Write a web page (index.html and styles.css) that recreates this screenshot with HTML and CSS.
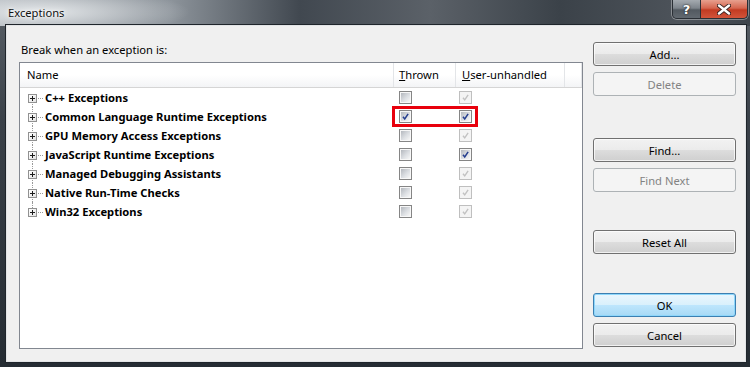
FILE: index.html
```html
<!DOCTYPE html>
<html lang="en">
<head>
    <meta charset="UTF-8">
    <title>Exceptions</title>
    <link rel="stylesheet" href="styles.css">
</head>
<body>
    <div class="window">
        <div class="titlebar">
            <span class="title">Exceptions</span>
            <div class="caption-buttons">
                <span class="cap help">?</span>
                <span class="cap close">
                    <svg width="14" height="11" viewBox="0 0 14 11">
                        <path d="M2 1.5 L12 9.5 M12 1.5 L2 9.5" stroke="#3a2320" stroke-width="4.2" stroke-linecap="round"/>
                        <path d="M2 1.5 L12 9.5 M12 1.5 L2 9.5" stroke="#fff" stroke-width="2.4" stroke-linecap="round"/>
                    </svg>
                </span>
            </div>
        </div>

        <div class="client">
            <div class="main">
                <div class="prompt">Break when an exception is:</div>
                <div class="listbox">
                    <div class="header">
                        <div class="col name">Name</div>
                        <div class="col thrown"><u>T</u>hrown</div>
                        <div class="col user"><u>U</u>ser-unhandled</div>
                        <div class="col fill"></div>
                    </div>

                    <div class="row first">
                        <div class="col name"><span class="expander"></span>C++ Exceptions</div>
                        <div class="col thrown"><span class="cb"></span></div>
                        <div class="col user"><span class="cb disabled"><svg viewBox="0 0 13 13"><polyline points="3.5,6.8 5.6,9.3 9.6,3.4"/></svg></span></div>
                    </div>
                    <div class="row">
                        <div class="col name"><span class="expander"></span>Common Language Runtime Exceptions</div>
                        <div class="col thrown"><span class="cb"><svg viewBox="0 0 13 13"><polyline points="3.5,6.8 5.6,9.3 9.6,3.4"/></svg></span></div>
                        <div class="col user"><span class="cb"><svg viewBox="0 0 13 13"><polyline points="3.5,6.8 5.6,9.3 9.6,3.4"/></svg></span></div>
                    </div>
                    <div class="row">
                        <div class="col name"><span class="expander"></span>GPU Memory Access Exceptions</div>
                        <div class="col thrown"><span class="cb"></span></div>
                        <div class="col user"><span class="cb disabled"><svg viewBox="0 0 13 13"><polyline points="3.5,6.8 5.6,9.3 9.6,3.4"/></svg></span></div>
                    </div>
                    <div class="row">
                        <div class="col name"><span class="expander"></span>JavaScript Runtime Exceptions</div>
                        <div class="col thrown"><span class="cb"></span></div>
                        <div class="col user"><span class="cb"><svg viewBox="0 0 13 13"><polyline points="3.5,6.8 5.6,9.3 9.6,3.4"/></svg></span></div>
                    </div>
                    <div class="row">
                        <div class="col name"><span class="expander"></span>Managed Debugging Assistants</div>
                        <div class="col thrown"><span class="cb"></span></div>
                        <div class="col user"><span class="cb disabled"><svg viewBox="0 0 13 13"><polyline points="3.5,6.8 5.6,9.3 9.6,3.4"/></svg></span></div>
                    </div>
                    <div class="row">
                        <div class="col name"><span class="expander"></span>Native Run-Time Checks</div>
                        <div class="col thrown"><span class="cb"></span></div>
                        <div class="col user"><span class="cb disabled"><svg viewBox="0 0 13 13"><polyline points="3.5,6.8 5.6,9.3 9.6,3.4"/></svg></span></div>
                    </div>
                    <div class="row last">
                        <div class="col name"><span class="expander"></span>Win32 Exceptions</div>
                        <div class="col thrown"><span class="cb"></span></div>
                        <div class="col user"><span class="cb disabled"><svg viewBox="0 0 13 13"><polyline points="3.5,6.8 5.6,9.3 9.6,3.4"/></svg></span></div>
                    </div>

                    <!-- annotation around the CLR checkboxes -->
                    <div class="highlight"></div>
                </div>
            </div>

            <div class="buttons">
                <button class="btn">Add...</button>
                <button class="btn" disabled>Delete</button>
                <button class="btn group">Find...</button>
                <button class="btn" disabled>Find Next</button>
                <button class="btn group reset">Reset All</button>
                <button class="btn default group ok">OK</button>
                <button class="btn">Cancel</button>
            </div>
        </div>
    </div>
</body>
</html>
```

FILE: styles.css
```css
body {
    margin: 0;
    background: #2b3239;
    font-family: "Noto Sans", "Open Sans", sans-serif;
    font-size: 11.2px;
    color: #000;
}

.window {
    width: 750px;
    height: 367px;
    display: flex;
    flex-direction: column;
    background: linear-gradient(to bottom, #5a6168 0, #3a4149 120px, #252c33 367px);
    overflow: hidden;
}

/* Title bar */
.titlebar {
    flex: 0 0 26px;
    display: flex;
    align-items: flex-start;
    background:
        radial-gradient(ellipse 150px 24px at 40px 12px, rgba(235,238,240,0.9), rgba(235,238,240,0) 100%),
        linear-gradient(to right, #a9afb5 0, #8d949b 170px, #414850 300px, #5b6168 430px, #3b4249 560px, #4d535a 680px, #3e454c 750px);
}

.title {
    padding: 5px 0 0 8px;
    line-height: 16px;
    color: #111;
    text-shadow: 0 0 6px #fff, 0 0 3px #fff;
}

.caption-buttons {
    margin-left: auto;
    margin-right: 2px;
    display: flex;
    height: 18px;
    border: 1px solid #2a2f35;
    border-top: none;
    border-radius: 0 0 5px 5px;
    overflow: hidden;
    box-shadow: 0 0 0 1px rgba(255,255,255,0.35);
}

.cap {
    display: flex;
    align-items: center;
    justify-content: center;
}

.help {
    width: 27px;
    border-right: 1px solid #2a2f35;
    background: linear-gradient(to bottom, #a4aab0 0, #7d848b 45%, #525960 55%, #626970 100%);
    color: #fff;
    font-family: "DejaVu Sans", sans-serif;
    font-weight: bold;
    font-size: 13px;
    text-shadow: 0 0 2px #222, 0 0 1px #222;
}

.close {
    width: 46px;
    background: linear-gradient(to bottom, #e7a08e 0, #d5664f 45%, #c23b22 55%, #d2543a 100%);
}

/* Client area */
.client {
    flex: 1;
    min-height: 0;
    margin: 0 5px 6px 7px;
    padding: 15px 9px 12px 12px;
    display: flex;
    background: #f0f0f0;
    box-shadow: 0 0 0 1px #e2e4e6, 0 0 0 2px #1f252b;
}

.main {
    width: 564px;
    display: flex;
    flex-direction: column;
}

.prompt {
    height: 21px;
    padding: 1px 0 0 2px;
    box-sizing: border-box;
    line-height: 15px;
}

.listbox {
    position: relative;
    flex: 1;
    background: #fff;
    border: 1px solid #828790;
}

.header {
    height: 24px;
    display: flex;
    border-bottom: 1px solid #d5d5d5;
    background: linear-gradient(to bottom, #fff 0, #fff 50%, #f3f4f6 100%);
}

.header .col {
    line-height: 24px;
    border-right: 1px solid #e3e5e8;
}

.header .name { padding-left: 7px; }
.header .thrown { padding-left: 5px; }
.header .user { padding-left: 6px; }

.col { box-sizing: border-box; }
.name { width: 374px; }
.thrown { width: 62px; }
.user { width: 109px; }
.fill { flex: 1; }

.row {
    height: 19px;
    display: flex;
}

.row .col {
    height: 19px;
    display: flex;
    align-items: center;
}

.row .name {
    position: relative;
    padding-left: 8px;
    font-weight: bold;
    background: repeating-linear-gradient(to right, #9a9a9a 0 1px, transparent 1px 2px) 18px 10px / 5px 1px no-repeat;
}

.row .thrown { padding-left: 5px; }
.row .user { padding-left: 3px; }

/* tree line and +/- boxes */
.row .name::before {
    content: "";
    position: absolute;
    left: 12px;
    top: 0;
    bottom: 0;
    border-left: 1px dotted #9a9a9a;
}

.row.first .name::before { top: 10px; }
.row.last .name::before { bottom: 9px; }

.expander {
    position: relative;
    z-index: 1;
    box-sizing: border-box;
    width: 9px;
    height: 9px;
    margin: 2px 8px 0 0;
    border: 1px solid #919191;
    background: linear-gradient(135deg, #fff 0, #e3e3e3 100%);
}

.expander::before {
    content: "";
    position: absolute;
    left: 1px;
    top: 3px;
    width: 5px;
    height: 1px;
    background: #1c1c1c;
}

.expander::after {
    content: "";
    position: absolute;
    left: 3px;
    top: 1px;
    width: 1px;
    height: 5px;
    background: #1c1c1c;
}

/* checkboxes */
.cb {
    box-sizing: border-box;
    width: 13px;
    height: 13px;
    margin-top: -1px;
    border: 1px solid #858585;
    background:
        linear-gradient(135deg, #b4b8be 0, #dcdfe3 55%, #f7f7f7 100%) 1px 1px / 9px 9px no-repeat,
        #f7f7f7;
    display: flex;
}

.cb svg {
    width: 11px;
    height: 11px;
}

.cb polyline {
    fill: none;
    stroke: #263f8f;
    stroke-width: 1.8;
}

.cb.disabled {
    border-color: #bfbfbf;
    background: #f4f4f4;
}

.cb.disabled polyline {
    stroke: #c2c2c2;
    stroke-width: 1.6;
}

.highlight {
    position: absolute;
    left: 372px;
    top: 43px;
    width: 80px;
    height: 15px;
    border: 3px solid #e8000c;
}

/* Buttons column */
.buttons {
    width: 143px;
    margin-left: 10px;
    padding-top: 1px;
    display: flex;
    flex-direction: column;
}

.btn {
    flex: 0 0 24px;
    height: 24px;
    margin: 0 0 6px 0;
    padding: 0;
    font-family: inherit;
    font-size: 11.2px;
    color: #000;
    border: 1px solid #707070;
    border-radius: 3px;
    background: linear-gradient(to bottom, #f2f2f2 0, #ebebeb 50%, #dddddd 50%, #cfcfcf 100%);
    box-shadow: inset 0 0 0 1px rgba(255,255,255,0.7);
}

.btn:last-child { margin-bottom: 0; }

.btn:disabled {
    color: #838383;
    border-color: #adb2b5;
    background: #f4f4f4;
    box-shadow: none;
}

.btn.group { margin-top: 36px; }
.btn.reset { margin-top: 32px; }
.btn.ok { margin-top: 33px; }

.btn.default {
    border-color: #3c7fb1;
    background: linear-gradient(to bottom, #eaf6fd 0, #d9f0fc 50%, #bee6fd 50%, #a7d9f5 100%);
    box-shadow: inset 0 0 0 1px #8ed7fb;
}
```
